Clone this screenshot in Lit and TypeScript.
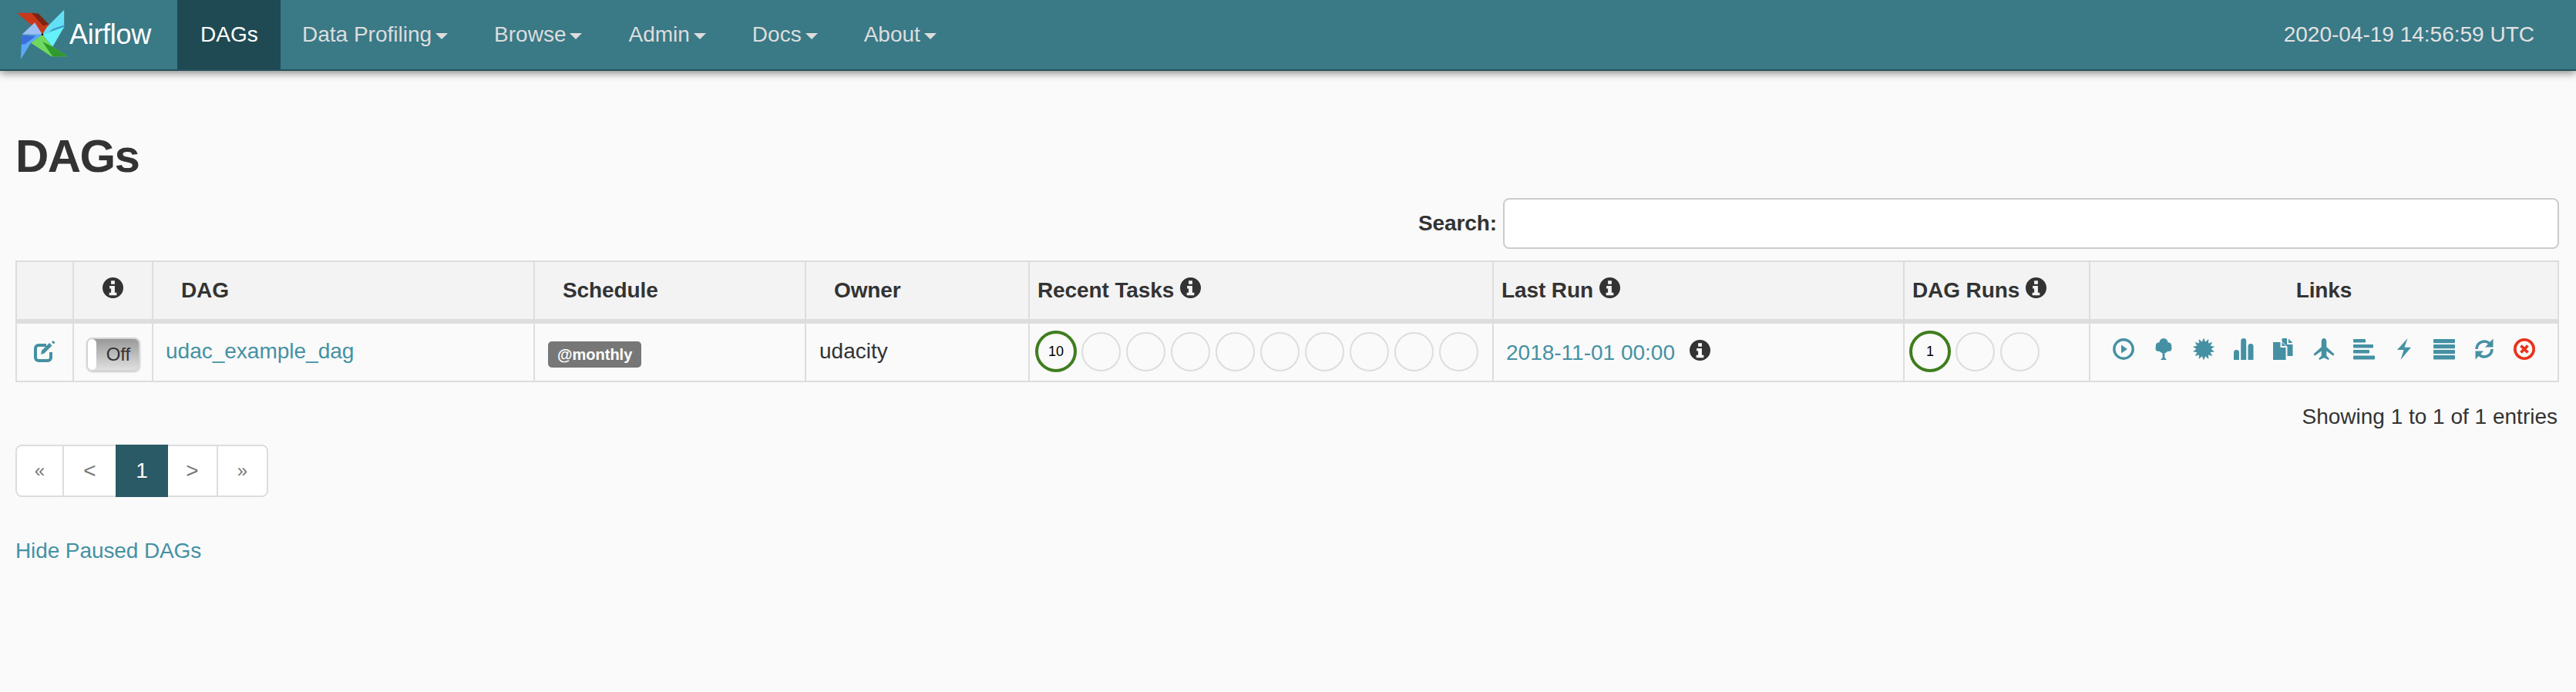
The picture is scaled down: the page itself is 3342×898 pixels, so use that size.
import { LitElement, html, css } from 'lit';
import { customElement } from 'lit/decorators.js';

const NAV = ['Data Profiling', 'Browse', 'Admin', 'Docs', 'About'];
const COL_WIDTHS = [74, 103, 495, 352, 290, 602, 533, 241, 608];

// star outline for the certificate icon
const starPoints = (() => {
  const pts: string[] = [];
  for (let i = 0; i < 28; i++) {
    const r = i % 2 ? 9.6 : 14.5;
    const a = (i * Math.PI) / 14;
    pts.push(`${(14 + r * Math.sin(a)).toFixed(2)},${(14 - r * Math.cos(a)).toFixed(2)}`);
  }
  return pts.join(' ');
})();

const infoIcon = html`<svg class="info" viewBox="0 0 28 28">
  <path fill-rule="evenodd" d="M14 0a14 14 0 1 0 0 28a14 14 0 1 0 0-28zM11.500 4.500h5v4.500h-5zM9.500 11.500h7v9h2.500v3.500h-10v-3.500h2.500v-5.500h-2z"></path>
</svg>`;

const linkIcons = [
  html`<svg viewBox="0 0 28 28"><circle cx="14" cy="14" r="12.200" fill="none" stroke="currentColor" stroke-width="3.400"></circle><path d="M11 8.500l8 5.500l-8 5.500z"></path></svg>`,
  html`<svg viewBox="0 0 28 28"><circle cx="14" cy="5.500" r="5.500"></circle><circle cx="8.500" cy="10" r="4.800"></circle><circle cx="19.500" cy="10" r="4.800"></circle><circle cx="7.500" cy="13" r="4"></circle><circle cx="20.500" cy="13" r="4"></circle><circle cx="14" cy="13" r="6.500"></circle><path d="M12.600 16h2.800v9l2.600 3h-8l2.600-3z"></path></svg>`,
  html`<svg viewBox="0 0 28 28"><polygon points="${starPoints}"></polygon></svg>`,
  html`<svg viewBox="0 0 28 28"><path d="M1 28v-9.500a3.500 3.500 0 0 1 7 0v9.500zM10.200 28v-24.500a3.500 3.500 0 0 1 7 0v24.500zM19.500 28v-17.500a3.500 3.500 0 0 1 7 0v17.500z"></path></svg>`,
  html`<svg viewBox="0 0 28 28"><path d="M0 5h9.500v7h7v16h-16.500z"></path><path d="M11.500 5l5 5h-5z"></path><path d="M11.500 0h6.500v8h7.500v15h-7v-12l-7-7zM20 0.500l5.500 5.500h-5.500z"></path></svg>`,
  html`<svg viewBox="0 0 28 28"><path d="M14 0c2 0 3.300 1.800 3.300 4v7.200l10.200 9.300l-1.600 2.200l-8.600-6.200v6l3.500 4l-1 1.500l-5.800-2.700l-5.800 2.700l-1-1.500l3.500-4v-6l-8.600 6.200l-1.600-2.200l10.200-9.300v-7.200c0-2.200 1.300-4 3.300-4z"></path></svg>`,
  html`<svg viewBox="0 0 28 28"><rect x="0" y="1" width="16" height="4.600" rx="1"></rect><rect x="0" y="8" width="26" height="4.600" rx="1"></rect><rect x="0" y="15" width="21" height="4.600" rx="1"></rect><rect x="0" y="22.500" width="28" height="5" rx="1"></rect></svg>`,
  html`<svg viewBox="0 0 28 28"><polygon points="18.600,0 5,15 13.600,15 9.400,28 23,11.700 14.400,11.700"></polygon></svg>`,
  html`<svg viewBox="0 0 28 28"><rect y="1" width="28" height="5.200" rx="1"></rect><rect y="8" width="28" height="5.200" rx="1"></rect><rect y="15" width="28" height="5.200" rx="1"></rect><rect y="22" width="28" height="5.600" rx="1"></rect></svg>`,
  html`<svg viewBox="0 0 28 28"><path d="M4 14a10 10 0 0 1 17-7" fill="none" stroke="currentColor" stroke-width="3.600"></path><path d="M25.500 0.500v11h-10.500z"></path><path d="M24 14a10 10 0 0 1 -17 7" fill="none" stroke="currentColor" stroke-width="3.600"></path><path d="M2.500 27.500v-11h10.500z"></path></svg>`,
  html`<svg class="danger" viewBox="0 0 28 28"><circle cx="14" cy="14" r="12.200" fill="none" stroke="currentColor" stroke-width="3.600"></circle><path d="M9.500 9.500l9 9M18.500 9.500l-9 9" fill="none" stroke="currentColor" stroke-width="3.800"></path></svg>`,
];

@customElement('app-root')
export class AppRoot extends LitElement {
  static override styles = css`
    :host {
      display: block;
      min-height: 898px;
      background: #fafafa;
      color: #333;
      font-family: 'Liberation Sans', Arial, sans-serif;
      font-size: 28px;
      line-height: 40px;
    }

    a {
      color: #4591a3;
      text-decoration: none;
    }

    .navbar {
      display: flex;
      align-items: stretch;
      height: 90px;
      padding-right: 54px;
      background: #3a7986;
      border-bottom: 2px solid #24515b;
      box-shadow: 0 3px 10px rgba(0, 0, 0, 0.45);
    }

    .brand {
      display: flex;
      align-items: center;
      width: 230px;
      padding-left: 20px;
      box-sizing: border-box;
      color: #fff;
      font-size: 36px;
      letter-spacing: -0.3px;
    }

    .brand svg {
      width: 70px;
      height: 68px;
      flex: none;
    }

    .nav-item {
      display: flex;
      align-items: center;
      padding: 0 30px;
      color: #ddd;
    }

    .nav-item.active {
      width: 134px;
      box-sizing: border-box;
      margin-right: -2px;
      padding: 0 31px 0 30px;
      background: #1f4a53;
      color: #fff;
    }

    .caret {
      width: 0;
      height: 0;
      margin-left: 5px;
      margin-top: 4px;
      border-left: 8px solid transparent;
      border-right: 8px solid transparent;
      border-top: 8px solid #ddd;
    }

    .clock {
      margin: auto 0 auto auto;
      color: #e2e2e2;
    }

    main {
      padding: 0 22px 0 20px;
    }

    h2 {
      margin: 78px 0 21px;
      font-size: 60px;
      line-height: 66px;
      font-weight: 700;
      letter-spacing: -1.6px;
    }

    .search {
      display: flex;
      align-items: center;
      justify-content: flex-end;
      gap: 8px;
      margin-bottom: 15px;
      font-weight: 700;
      letter-spacing: -0.1px;
    }

    .search input {
      width: 1370px;
      height: 66px;
      box-sizing: border-box;
      border: 2px solid #ccc;
      border-radius: 8px;
      background: #fff;
    }

    table {
      width: 3298px;
      table-layout: fixed;
      border-collapse: collapse;
    }

    th,
    td {
      border: 2px solid #ddd;
      padding: 0 10px;
    }

    th {
      height: 74px;
      border-bottom-width: 6px;
      background: #f3f3f3;
      text-align: left;
      font-weight: 700;
      white-space: nowrap;
      letter-spacing: -0.1px;
    }

    th.wide {
      padding-left: 36px;
    }

    th.center,
    td.center {
      text-align: center;
      padding: 0;
    }

    td {
      box-sizing: border-box;
      height: 78px;
    }

    td.dag {
      padding: 0 10px 3px 16px;
    }

    td.owner {
      padding: 0 10px 3px 17px;
    }

    .info {
      display: inline-block;
      width: 27px;
      height: 27px;
      vertical-align: -1px;
      fill: #333;
    }

    .edit {
      display: block;
      width: 28px;
      height: 28px;
      margin: -2px auto 0;
      color: #4591a3;
    }

    .toggle {
      position: relative;
      display: inline-block;
      width: 70px;
      height: 44px;
      box-sizing: border-box;
      margin-top: 6px;
      padding-left: 14px;
      border: 2px solid #d4d4d4;
      border-radius: 8px;
      background: linear-gradient(#999, #e0e0e0);
      box-shadow: 0 1px 2px rgba(0, 0, 0, 0.2);
      font-size: 24px;
      line-height: 40px;
      vertical-align: middle;
    }

    .knob {
      position: absolute;
      left: 0;
      top: 0;
      bottom: 0;
      width: 11px;
      border-radius: 6px;
      background: #fff;
    }

    .label {
      display: inline-block;
      margin-left: 7px;
      margin-top: 3px;
      padding: 0 12px;
      height: 34px;
      border-radius: 5px;
      background: #777;
      color: #fff;
      font-size: 20px;
      font-weight: 700;
      line-height: 34px;
      vertical-align: middle;
    }

    .circles {
      display: flex;
      align-items: center;
      margin-top: -2px;
    }

    .slot {
      display: flex;
      align-items: center;
      justify-content: center;
      width: 58px;
      height: 56px;
    }

    .circle {
      width: 51px;
      height: 51px;
      box-sizing: border-box;
      border: 2px solid #ddd;
      border-radius: 50%;
    }

    .circle.done {
      width: 54px;
      height: 54px;
      border: 4px solid #3f7d1e;
      color: #000;
      font-size: 18px;
      line-height: 46px;
      text-align: center;
    }

    td.tasks {
      padding: 0 0 0 5px;
    }

    td.runs {
      padding: 0 0 0 4px;
    }

    td.last {
      padding: 2px 10px 0 16px;
      white-space: nowrap;
    }

    td.last .info {
      margin-left: 19px;
    }

    .links {
      display: flex;
      align-items: center;
      gap: 24px;
      padding-left: 19px;
      margin-top: -8px;
      color: #4591a3;
    }

    .links svg {
      width: 28px;
      height: 28px;
      flex: none;
      fill: currentColor;
    }

    .links svg.danger {
      color: #e8321c;
    }

    .count {
      margin-top: 25px;
      text-align: right;
      padding-right: 2px;
    }

    .pager {
      display: inline-flex;
      margin-top: 16px;
      height: 68px;
      color: #777;
      background: #fff;
      vertical-align: top;
    }

    .pager span {
      display: flex;
      align-items: center;
      justify-content: center;
      box-sizing: border-box;
      border: 2px solid #ddd;
      border-left-width: 0;
    }

    .pager .first {
      width: 63px;
      border-left-width: 2px;
      border-radius: 8px 0 0 8px;
      font-size: 24px;
    }

    .pager .prev {
      width: 67px;
      border-right-width: 0;
    }

    .pager .current {
      width: 68px;
      border: 0;
      background: #2a5a66;
      color: #fff;
    }

    .pager .next {
      width: 65px;
    }

    .pager .last-page {
      width: 65px;
      border-radius: 0 8px 8px 0;
      font-size: 24px;
    }

    .hide {
      margin-top: 50px;
      letter-spacing: -0.1px;
    }
  `;

  private _logo() {
    return html`<svg viewBox="60 20 210 205">
      <polygon points="66,37 130,37 212,100 165,122" fill="#c8391a"></polygon>
      <polygon points="122,37 150,40 190,82 168,88" fill="#7e2412"></polygon>
      <polygon points="85,122 135,75 165,122" fill="#9cc0f5"></polygon>
      <polygon points="85,125 165,122 120,155 80,220" fill="#5aa8f8"></polygon>
      <polygon points="85,125 140,128 96,160 82,160" fill="#3a6fd8"></polygon>
      <polygon points="250,25 250,92 165,122 183,92" fill="#64e0f5"></polygon>
      <polygon points="250,85 250,100 182,120 205,100" fill="#3d9dc8"></polygon>
      <polygon points="165,122 250,92 205,170" fill="#66f0f8"></polygon>
      <polygon points="120,155 165,122 205,170 265,208 200,208" fill="#6fd860"></polygon>
      <polygon points="165,150 205,170 265,208 205,208" fill="#2f9a2e"></polygon>
      <circle cx="165" cy="122" r="4" fill="#111"></circle>
    </svg>`;
  }

  private _circles(count: number, done: string) {
    return html`<div class="circles">
      ${Array.from({ length: count }, (_, i) => html`<div class="slot">
        ${i === 0
          ? html`<div class="circle done">${done}</div>`
          : html`<div class="circle"></div>`}
      </div>`)}
    </div>`;
  }

  override render() {
    return html`
      <nav class="navbar">
        <div class="brand">${this._logo()}Airflow</div>
        <div class="nav-item active">DAGs</div>
        ${NAV.map((item) => html`<div class="nav-item">${item}<span class="caret"></span></div>`)}
        <div class="clock">2020-04-19 14:56:59 UTC</div>
      </nav>
      <main>
        <h2>DAGs</h2>
        <div class="search">
          <span>Search:</span>
          <input type="search" />
        </div>
        <table>
          <colgroup>
            ${COL_WIDTHS.map((w) => html`<col style="width: ${w}px" />`)}
          </colgroup>
          <thead>
            <tr>
              <th></th>
              <th class="center">${infoIcon}</th>
              <th class="wide">DAG</th>
              <th class="wide">Schedule</th>
              <th class="wide">Owner</th>
              <th>Recent Tasks ${infoIcon}</th>
              <th>Last Run ${infoIcon}</th>
              <th>DAG Runs ${infoIcon}</th>
              <th class="center">Links</th>
            </tr>
          </thead>
          <tbody>
            <tr>
              <td class="center">
                <svg class="edit" viewBox="0 0 28 28">
                  <path d="M22 15v7a4 4 0 0 1-4 4H6a4 4 0 0 1-4-4V10a4 4 0 0 1 4-4h10" fill="none" stroke="currentColor" stroke-width="4"></path>
                  <path d="M10 13L20 3l3.500 3.500-10 10L9 18z" fill="currentColor"></path>
                  <path d="M25 0l2.500 2.500-2 2-2.500-2.500z" fill="currentColor"></path>
                </svg>
              </td>
              <td class="center"><span class="toggle"><span class="knob"></span>Off</span></td>
              <td class="dag"><a href="#">udac_example_dag</a></td>
              <td><span class="label">@monthly</span></td>
              <td class="owner">udacity</td>
              <td class="tasks">${this._circles(10, '10')}</td>
              <td class="last"><a href="#">2018-11-01 00:00</a>${infoIcon}</td>
              <td class="runs">${this._circles(3, '1')}</td>
              <td><div class="links">${linkIcons}</div></td>
            </tr>
          </tbody>
        </table>
        <div class="count">Showing 1 to 1 of 1 entries</div>
        <div class="pager">
          <span class="first">«</span>
          <span class="prev">&lt;</span>
          <span class="current">1</span>
          <span class="next">&gt;</span>
          <span class="last-page">»</span>
        </div>
        <div class="hide"><a href="#">Hide Paused DAGs</a></div>
      </main>
    `;
  }
}
